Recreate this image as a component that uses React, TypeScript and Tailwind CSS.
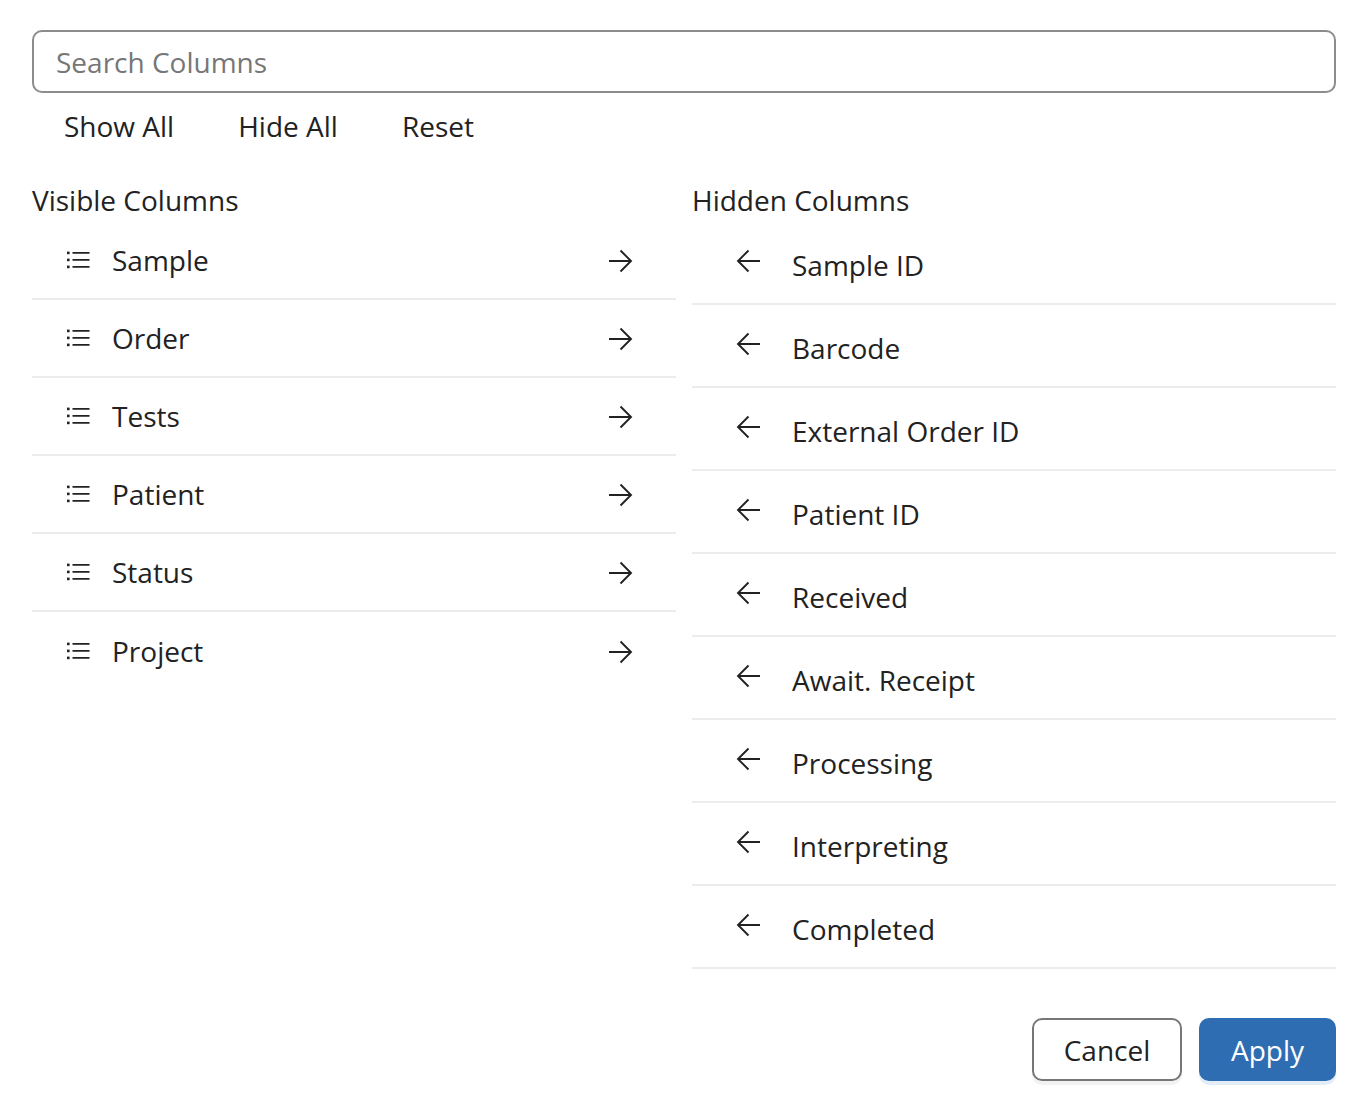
import { useState } from "react";

const visibleInit = ["Sample", "Order", "Tests", "Patient", "Status", "Project"];
const hiddenInit = [
  "Sample ID",
  "Barcode",
  "External Order ID",
  "Patient ID",
  "Received",
  "Await. Receipt",
  "Processing",
  "Interpreting",
  "Completed",
];

const ListIcon = () => (
  <svg width="23" height="20" viewBox="0 0 23 20" fill="none" className="shrink-0">
    <rect x="0" y="1.6" width="2.6" height="2.6" fill="#222" />
    <rect x="0" y="8.6" width="2.6" height="2.6" fill="#222" />
    <rect x="0" y="15.6" width="2.6" height="2.6" fill="#222" />
    <path d="M5.5 2.9h17M5.5 9.9h17M5.5 16.9h17" stroke="#222" strokeWidth="1.7" />
  </svg>
);

const ArrowRight = () => (
  <svg width="25" height="24" viewBox="0 0 25 24" fill="none" className="shrink-0">
    <path d="M1 12h22M12.5 1.5L23 12 12.5 22.5" stroke="#222" strokeWidth="1.9" />
  </svg>
);

const ArrowLeft = () => (
  <svg width="25" height="24" viewBox="0 0 25 24" fill="none" className="shrink-0">
    <path d="M24 12H2M12.5 1.5L2 12l10.5 10.5" stroke="#222" strokeWidth="1.9" />
  </svg>
);

const App = () => {
  const [visible, setVisible] = useState(visibleInit);
  const [hidden, setHidden] = useState(hiddenInit);
  const [query, setQuery] = useState("");

  const hide = (name: string) => {
    setVisible(visible.filter((v) => v !== name));
    setHidden([...hidden, name]);
  };

  const show = (name: string) => {
    setHidden(hidden.filter((h) => h !== name));
    setVisible([...visible, name]);
  };

  const match = (name: string) => name.toLowerCase().includes(query.toLowerCase());

  return (
    <div
      className="min-h-[1108px] bg-white text-[#222]"
      style={{ fontFamily: "'Open Sans', 'Noto Sans', sans-serif" }}
    >
      <div className="ml-8 w-[1304px] pt-[30px]">
        {/* Search */}
        <input
          value={query}
          onChange={(e) => setQuery(e.target.value)}
          placeholder="Search Columns"
          className="h-[63px] w-full rounded-[10px] border-2 border-[#8c8c8c] px-[22px] text-[28px] text-[#222] placeholder:text-[#777] outline-none"
        />

        {/* Bulk actions */}
        <div className="mt-[9px] flex">
          <button
            className="h-12 px-8 text-[28px] leading-[48px]"
            onClick={() => {
              setVisible([...visible, ...hidden]);
              setHidden([]);
            }}
          >
            Show All
          </button>
          <button
            className="h-12 px-8 text-[28px] leading-[48px]"
            onClick={() => {
              setHidden([...hidden, ...visible]);
              setVisible([]);
            }}
          >
            Hide All
          </button>
          <button
            className="h-12 px-8 text-[28px] leading-[48px]"
            onClick={() => {
              setVisible(visibleInit);
              setHidden(hiddenInit);
            }}
          >
            Reset
          </button>
        </div>

        {/* Columns */}
        <div className="mt-[31px] grid grid-cols-2 gap-4">
          <div>
            <div className="flex h-[41px] items-center pb-1 text-[28px]">Visible Columns</div>
            {visible.filter(match).map((name, i, arr) => (
              <div
                key={name}
                className={`flex h-[78px] items-center pl-[35px] pr-[43px] ${
                  i < arr.length - 1 ? "border-b-2 border-[#ececec]" : ""
                }`}
              >
                <ListIcon />
                <span className="ml-[22px] flex-1 text-[28px]">{name}</span>
                <button onClick={() => hide(name)} className="mt-0.5">
                  <ArrowRight />
                </button>
              </div>
            ))}
          </div>

          <div>
            <div className="flex h-[41px] items-center pb-1 text-[28px]">Hidden Columns</div>
            {hidden.filter(match).map((name) => (
              <div
                key={name}
                className="flex h-[83px] items-center border-b-2 border-[#ececec] pl-[44px]"
              >
                <button onClick={() => show(name)} className="-mt-1">
                  <ArrowLeft />
                </button>
                <span className="ml-[31px] pt-1 text-[28px]">{name}</span>
              </div>
            ))}
          </div>
        </div>

        {/* Footer */}
        <div className="mt-[49px] flex justify-end gap-[17px]">
          <button className="h-[63px] w-[150px] rounded-[10px] border-2 border-[#777] bg-white text-[28px] text-[#222] shadow-[0_4px_0_#f2f2f2]">
            Cancel
          </button>
          <button className="h-[63px] w-[137px] rounded-[10px] bg-[#2f6db3] text-[28px] text-white shadow-[0_4px_0_#e2edf7]">
            Apply
          </button>
        </div>
      </div>
    </div>
  );
};

export default App;
